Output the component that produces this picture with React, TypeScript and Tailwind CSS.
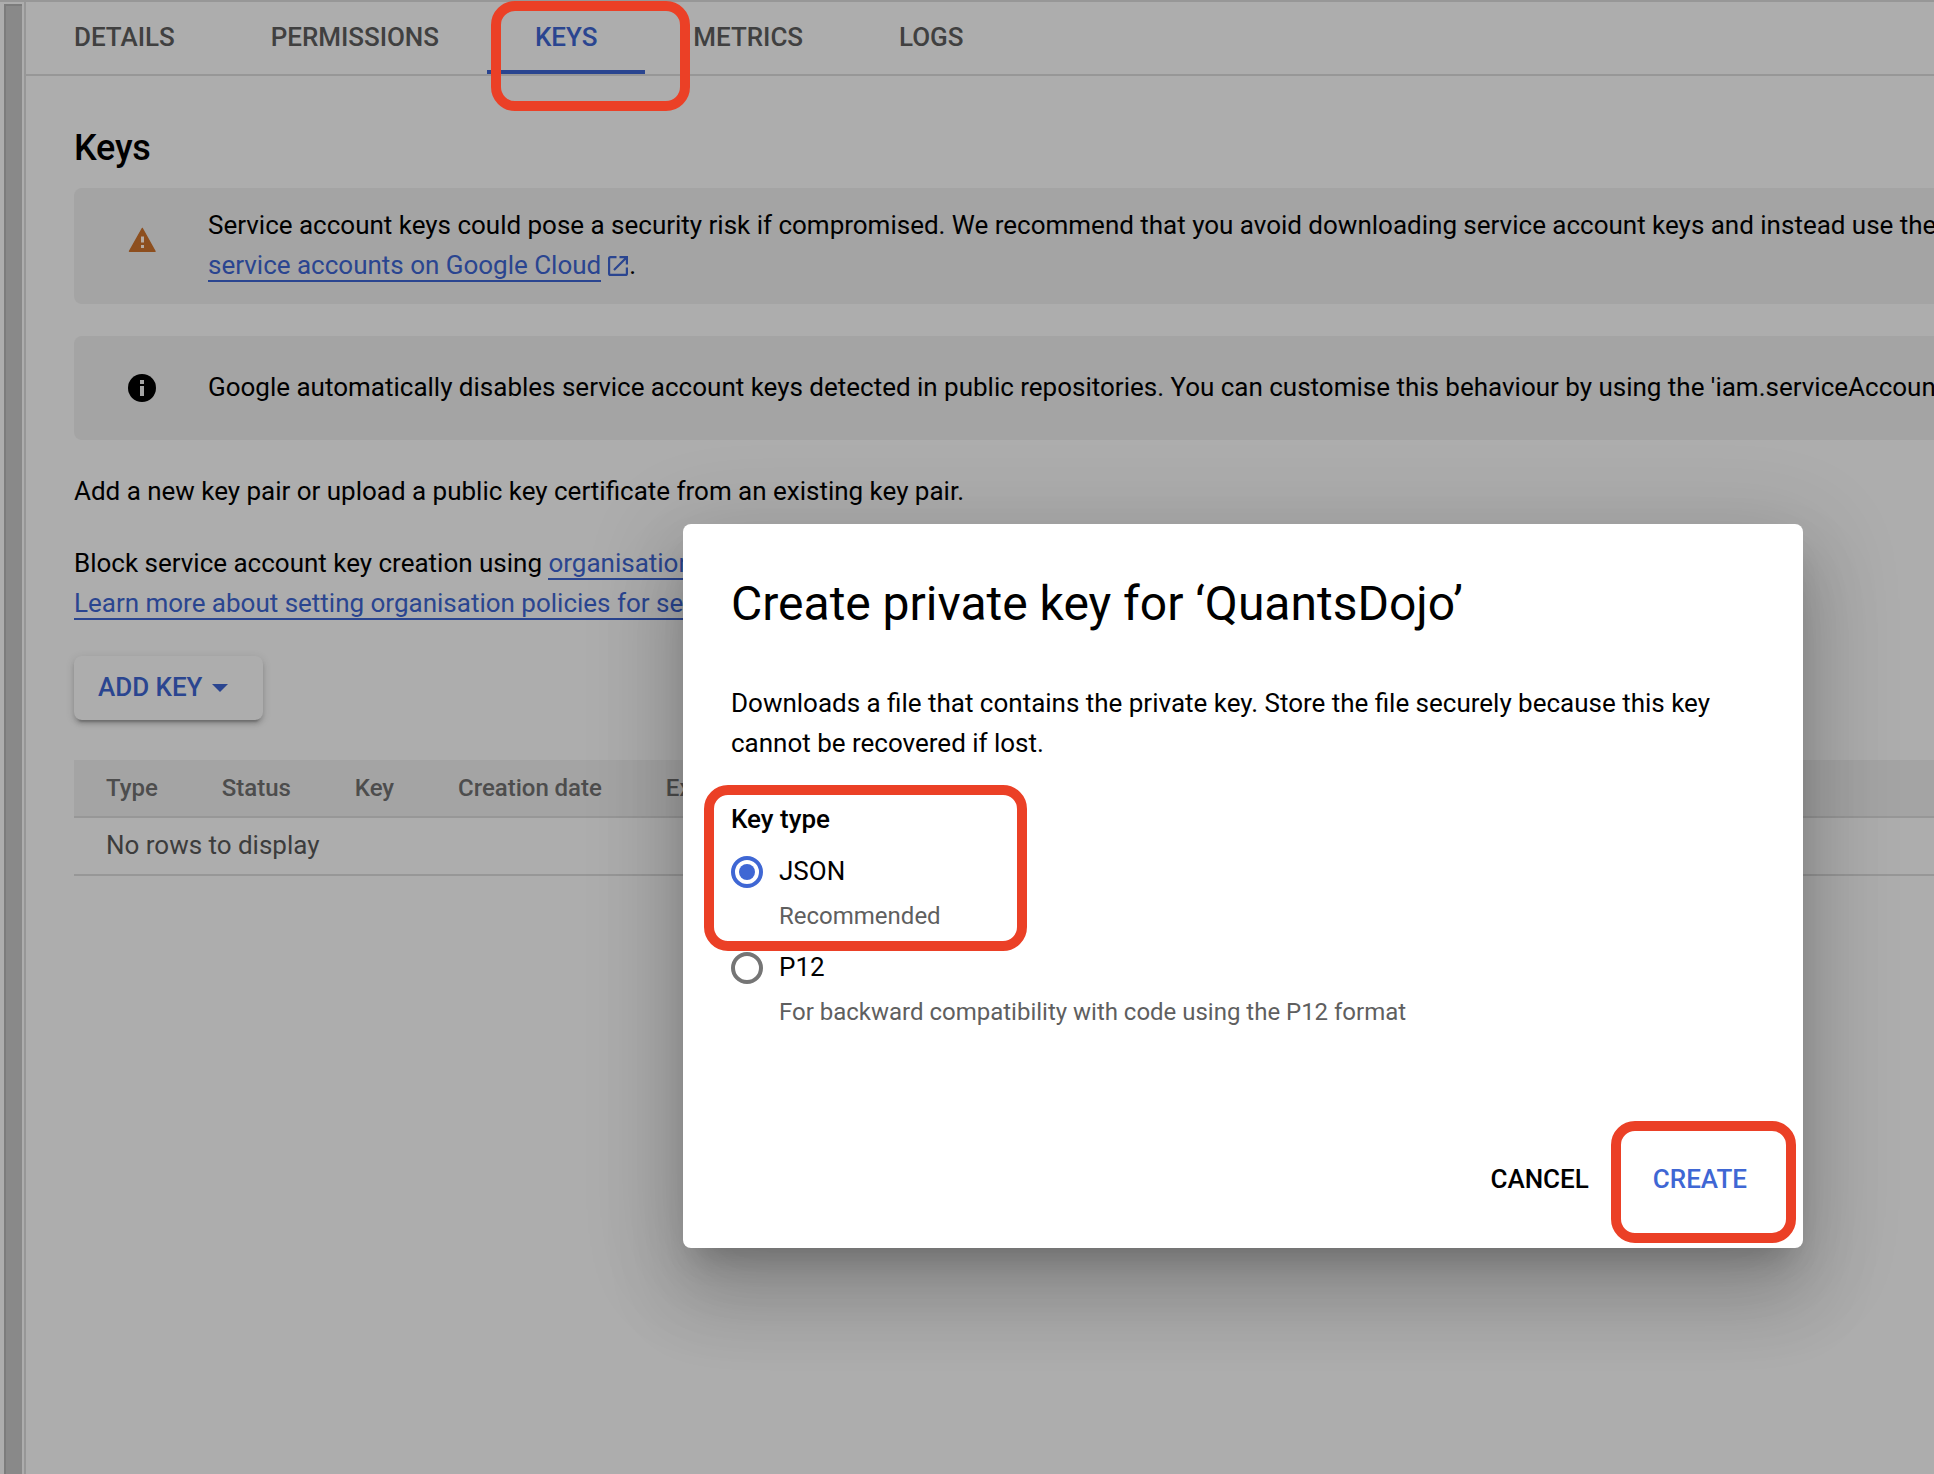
import React from "react";

const tabs = ["DETAILS", "PERMISSIONS", "KEYS", "METRICS", "LOGS"];
const columns = ["Type", "Status", "Key", "Creation date", "Expiry date"];

function TabBar() {
  return (
    <nav className="flex h-[76px] shrink-0 border-y-2 border-[#979797] font-medium tracking-[-0.04px] text-[#404040]">
      {tabs.map((tab) => (
        <div
          key={tab}
          className={
            tab === "KEYS"
              ? "h-[72px] border-b-4 border-[#2a4590] px-12 pt-[15px] text-[#2a4590]"
              : "h-[72px] px-12 pt-[15px]"
          }
        >
          {tab}
        </div>
      ))}
    </nav>
  );
}

function WarningIcon() {
  return (
    <svg viewBox="0 0 28 26" className="h-[26px] w-7">
      <path d="M14.300 1.500 27 24.300H1.500Z" fill="#8d4f1f" stroke="#8d4f1f" strokeWidth="1.500" strokeLinejoin="round" />
      <path d="M13 9.500h3v6h-3zM13 18h3v3h-3z" fill="#b5aaa2" />
    </svg>
  );
}

function InfoIcon() {
  return (
    <svg viewBox="0 0 28 28" className="size-7">
      <circle cx="14" cy="14" r="14" fill="#000" />
      <path d="M12 6h4v4h-4zM12 12h4v10h-4z" fill="#a4a4a4" />
    </svg>
  );
}

function ExternalIcon() {
  return (
    <svg viewBox="0 0 20 20" className="mr-px ml-[7px] inline-block size-5 align-[-2px]" fill="none" stroke="#2a4590" strokeWidth="2.200">
      <path d="M8.500 1.100H2.600Q1.100 1.100 1.100 2.600V17.400Q1.100 18.900 2.600 18.900H17.400Q18.900 18.900 18.900 17.400V11.500M11.500 1.100H18.900V8.500M18.500 1.500 6 14" />
    </svg>
  );
}

function Notice({ icon, className, children }: { icon: React.ReactNode; className: string; children: React.ReactNode }) {
  return (
    <div className={`flex shrink-0 rounded-l-lg bg-[#a4a4a4] ${className}`}>
      <div className="flex w-[134px] shrink-0 pl-[54px]">{icon}</div>
      <div className="overflow-hidden whitespace-nowrap">{children}</div>
    </div>
  );
}

function Link({ children }: { children: React.ReactNode }) {
  return <span className="border-b-2 border-[#2a4590] text-[#2a4590]">{children}</span>;
}

function Radio({ checked }: { checked?: boolean }) {
  return (
    <span
      className={
        checked
          ? "flex size-8 shrink-0 items-center justify-center rounded-full border-4 border-[#3f67d4]"
          : "size-8 shrink-0 rounded-full border-4 border-[#757575]"
      }
    >
      {checked && <span className="size-4 rounded-full bg-[#3f67d4]" />}
    </span>
  );
}

function Option({ label, hint, checked }: { label: string; hint: string; checked?: boolean }) {
  return (
    <div className="flex h-24 gap-4">
      <Radio checked={checked} />
      <div>
        <div className="-mt-[5px]">{label}</div>
        <div className="mt-[5px] text-[24px] text-[#5f5f5f]">{hint}</div>
      </div>
    </div>
  );
}

function Dialog() {
  return (
    <section className="absolute top-[524px] left-[683px] flex h-[724px] w-[1120px] flex-col rounded-lg bg-white px-12 shadow-[0_22px_30px_-14px_rgba(0,0,0,0.2),0_48px_76px_6px_rgba(0,0,0,0.14),0_18px_92px_16px_rgba(0,0,0,0.12)]">
      <h2 className="mt-12 text-[48px] leading-[64px]">Create private key for ‘QuantsDojo’</h2>
      <p className="mt-[47px] whitespace-nowrap">
        Downloads a file that contains the private key. Store the file securely because this key
        <br />
        cannot be recovered if lost.
      </p>
      <div className="mt-9 font-medium">Key type</div>
      <div className="mt-[17px]">
        <Option label="JSON" hint="Recommended" checked />
        <Option label="P12" hint="For backward compatibility with code using the P12 format" />
      </div>
      <div className="mt-[111px] flex justify-end gap-16 pr-2 font-medium">
        <span>CANCEL</span>
        <span className="text-[#3f67d4]">CREATE</span>
      </div>
    </section>
  );
}

export default function App() {
  return (
    <div className="relative flex h-[1474px] w-[1934px] overflow-hidden bg-[#adadad] font-[Roboto,sans-serif] text-[26px] leading-10 text-black [word-spacing:-0.065px]">
      <div className="w-6 shrink-0 border-t-2 border-[#979797] pt-0.5 pl-1">
        <div className="h-full w-[18px] border-t-2 border-l-2 border-[#7c7c7c] bg-[#898989]" />
      </div>
      <div className="w-0.5 shrink-0 bg-[#979797]" />
      <main className="flex min-w-0 flex-1 flex-col">
        <TabBar />
        <div className="flex flex-1 flex-col pl-12">
          <h1 className="mt-12 h-16 text-[36px] leading-[48px] font-medium tracking-[-0.2px]">Keys</h1>
          <Notice className="h-[116px] pt-[17px]" icon={<div className="mt-[22px]"><WarningIcon /></div>}>
            Service account keys could pose a security risk if compromised. We recommend that you avoid downloading service account keys and instead use the
            <br />
            <Link>service accounts on Google Cloud</Link>
            <ExternalIcon />.
          </Notice>
          <Notice className="mt-8 h-[104px] pt-[31px]" icon={<div className="mt-[7px]"><InfoIcon /></div>}>
            Google automatically disables service account keys detected in public repositories. You can customise this behaviour by using the 'iam.serviceAccountKeyExposureResponse'
          </Notice>
          <p className="mt-[31px]">Add a new key pair or upload a public key certificate from an existing key pair.</p>
          <p className="mt-8">
            Block service account key creation using <Link>organisation policies</Link>.
            <br />
            <Link>Learn more about setting organisation policies for service accounts</Link>
          </p>
          <button className="mt-[33px] flex h-16 w-[189px] shrink-0 items-center rounded-lg pb-0.5 pl-6 text-left font-medium tracking-[-0.04px] text-[#2a4590] shadow-[0_6px_2px_-4px_rgba(0,0,0,0.2),0_4px_4px_0_rgba(0,0,0,0.14),0_2px_10px_0_rgba(0,0,0,0.12)]">
            ADD KEY
            <svg viewBox="0 0 16 8" className="mt-0.5 ml-2.5 h-2 w-4"><path d="M0 0h16L8 8z" fill="#2a4590" /></svg>
          </button>
          <div className="mt-10 flex h-[58px] shrink-0 gap-16 border-b-2 border-[#979797] bg-[#a4a4a4] pt-2 pl-8 text-[24px] font-medium tracking-[-0.02px] text-[#4d4d4d]">
            {columns.map((column) => (
              <span key={column}>{column}</span>
            ))}
          </div>
          <div className="h-[58px] shrink-0 border-b-2 border-[#979797] pt-[7px] pl-8 text-[#3c3c3c]">No rows to display</div>
        </div>
      </main>
      <Dialog />
      <div className="absolute top-px left-[491px] h-[110px] w-[199px] rounded-[24px] border-[10px] border-[#eb4026]" />
      <div className="absolute top-[785px] left-[704px] h-[166px] w-[323px] rounded-[24px] border-[10px] border-[#eb4026]" />
      <div className="absolute top-[1121px] left-[1611px] h-[122px] w-[185px] rounded-[24px] border-[10px] border-[#eb4026]" />
    </div>
  );
}
